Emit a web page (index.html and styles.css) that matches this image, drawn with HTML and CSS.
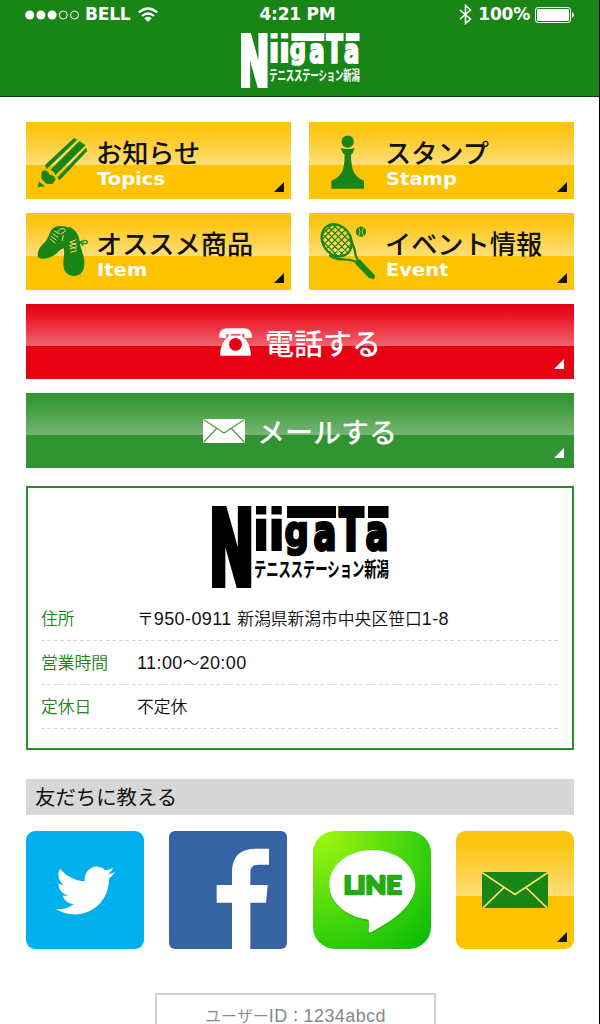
FILE: index.html
```html
<!DOCTYPE html>
<html lang="ja">
<head>
    <meta charset="UTF-8">
    <meta name="viewport" content="width=device-width, initial-scale=1.0">
    <title>Niigata テニスステーション新潟</title>
    <link rel="stylesheet" href="styles.css">
</head>
<body>
    <div class="page">
        <header class="header">
            <div class="status">
                <div class="status-left">
                    <svg width="54" height="10" viewBox="0 0 54 10">
                        <g fill="#fff"><circle cx="4.700" cy="5" r="4.500"/><circle cx="15.900" cy="5" r="4.500"/><circle cx="27.100" cy="5" r="4.500"/></g>
                        <g fill="none" stroke="#fff"><circle cx="38.300" cy="5" r="4"/><circle cx="49.500" cy="5" r="4"/></g>
                    </svg>
                    <span class="carrier">BELL</span>
                    <svg width="20" height="15" viewBox="0 0 20 15">
                        <g fill="none" stroke="#fff" stroke-width="2.200"><path d="M.8 5.500Q10-2.500 19.200 5.500"/><path d="M4 9Q10 4 16 9"/></g>
                        <path d="M6.300 11.200Q10 8.500 13.700 11.200L10 15z" fill="#fff"/>
                    </svg>
                </div>
                <span class="time">4:21 PM</span>
                <div class="status-right">
                    <svg width="13" height="21" viewBox="0 0 13 21"><path d="M1 6l10.500 9L6.500 19.500V1.500L11.500 6 1 15" fill="none" stroke="#fff" stroke-width="1.600"/></svg>
                    <span class="percent">100%</span>
                    <svg width="40" height="16" viewBox="0 0 40 16"><rect x=".5" y=".5" width="35" height="15" rx="2.500" fill="none" stroke="#fff"/><rect x="2" y="2" width="32" height="12" rx="1" fill="#fff"/><path d="M37 5q4 3 0 6z" fill="#fff"/></svg>
                </div>
            </div>
            <svg class="header-logo" viewBox="0 0 177 82">
                <g fill="currentColor" stroke="currentColor">
                    <text class="logo-n" transform="translate(-3.2 78.500) scale(.53 1)" font-size="103" stroke-width="7">N</text>
                    <text class="logo-en" x="39" y="45" font-size="59" stroke="none">i</text>
                    <text class="logo-en" x="54.500" y="45" font-size="59" stroke="none">i</text>
                    <text class="logo-en" transform="translate(72.500 39.500) scale(.79 1)" font-size="43" stroke-width="2.500">g</text>
                    <text class="logo-en" transform="translate(101.500 44) scale(.68 1)" font-size="50" stroke-width="3">a</text>
                    <text class="logo-en" transform="translate(127.500 43.500) scale(.58 1)" font-size="58" stroke-width="5">T</text>
                    <text class="logo-en" transform="translate(153.500 44) scale(.68 1)" font-size="50" stroke-width="3">a</text>
                    <rect x="75" y="0" width="49" height="12" stroke="none"/>
                    <rect x="127" y="0" width="25.500" height="12" stroke="none"/>
                    <rect x="156" y="0" width="20.500" height="12" stroke="none"/>
                    <text class="logo-ja" transform="translate(42 70.500) scale(.614 1)" font-size="20" stroke-width=".2">テニスステーション新潟</text>
                </g>
            </svg>
        </header>

        <main class="main">
            <nav class="menu">
                <a class="menu-item corner">
                    <svg class="menu-icon" viewBox="18 21 210 231">
                        <g fill="#1a8517">
                            <path d="M75 150L162 69l10 5-92 89z"/>
                            <path d="M91 164L178 78l19 13-91 90-5-10z"/>
                            <path d="M112 187l86-89 4 9-83 89z"/>
                            <path d="M65 170l8-5 11 5 5 9 13 4 5 11-10 13-18-1-15-15z"/>
                            <path d="M57 200l18 14-22 3z"/>
                        </g>
                    </svg>
                    <div><b>お知らせ</b><span>Topics</span></div>
                </a>
                <a class="menu-item corner wide">
                    <svg class="menu-icon" viewBox="27 21 210 231">
                        <g fill="#1a8517">
                            <circle cx="143" cy="80" r="18.500"/>
                            <path d="M122 99q21 6 42 0l-6 16-5 4q0 31 7 49 9 21 32 29v24H94v-24q24-9 33-29 7-18 7-49l-5-4z"/>
                        </g>
                    </svg>
                    <div><b>スタンプ</b><span>Stamp</span></div>
                </a>
                <a class="menu-item corner">
                    <svg class="menu-icon" viewBox="18 24 210 231">
                        <g fill="#1a8517">
                            <path d="M100 69c-11 8-13 27-24 41-14 12-26 27-22 46 10 13 48 1 62-17 7-8 16-8 22-13l10-56c-13-9-34-9-48-1z"/>
                            <path d="M127 89c-1 20 9 42 4 71-4 28 2 52 32 53 25-1 34-25 29-52-3-21-12-34-14-57-3-20-16-33-31-39z"/>
                        </g>
                        <g fill="none" stroke="#ffdc67" stroke-width="3">
                            <path d="M90 102l16 12M93 94l17 12M98 86l16 11M103 78l17 9M114 80c5-12 21-12 22-3-4 8-10 5-14 11M130 91l-4 17M149 112l20-8M148 122l22-8M149 132l22-7M151 142l20-5M151 112l18 8M150 124l19 7"/>
                        </g>
                        <path d="M177 112c9-3 22-10 25-2 0 8-13 7-22 1l10 11" fill="none" stroke="#1a8517" stroke-width="4"/>
                    </svg>
                    <div><b>オススメ商品</b><span>Item</span></div>
                </a>
                <a class="menu-item corner wide">
                    <svg class="menu-icon" viewBox="27 24 210 231">
                        <clipPath id="head"><ellipse cx="110" cy="106" rx="42" ry="51" transform="rotate(-35 110 106)"/></clipPath>
                        <g fill="none" stroke="#1a8517">
                            <path clip-path="url(#head)" stroke-width="3.500" d="M40 80l90 90M50 70l100 100M60 60l100 100M70 50l100 100M80 40l100 100M40 100l80 80M40 120l60 60M150 40L40 150M130 40L40 130M165 45L50 160M175 55L60 170M180 70L75 175M180 90L90 180M115 40L40 115"/>
                            <ellipse cx="110" cy="106" rx="42" ry="51" transform="rotate(-35 110 106)" stroke-width="7"/>
                            <path stroke-width="7" d="M88 150q15 12 40 13 34 1 48 12M150 98q9 21 14 36 2 24 16 42"/>
                            <path stroke-width="19" d="M172 169l43 45"/>
                            <path stroke-width="14" stroke-linecap="round" d="M207 206l11 9"/>
                        </g>
                        <circle cx="183" cy="80" r="15.500" fill="#1a8517"/>
                        <path d="M174 67q11 13 1 26M192 67q-10 13-1 26" fill="none" stroke="#ffd342" stroke-width="2.500"/>
                    </svg>
                    <div><b>イベント情報</b><span>Event</span></div>
                </a>
            </nav>

            <a class="contact tel corner">
                <svg width="33" height="28" viewBox="118 84 98 82">
                    <path d="M118 112q0-27 22-28h54q22 1 22 28l-20 2q-4-3-3-13h-6v7q23 17 26 55-1 3-5 3h-82q-5 0-5-4 2-36 25-54v-7h-6q1 10-3 13z" fill="#fff"/>
                    <path d="M153 101h28v5h-28z" fill="#ee5460"/>
                    <circle cx="167" cy="132" r="19" fill="#e60012"/>
                </svg>
                <b>電話する</b>
            </a>
            <a class="contact mail corner">
                <svg width="42" height="24" viewBox="0 0 42 24">
                    <path d="M0 0h42v24H0z" fill="#fff"/>
                    <path d="M.5.5L21 14 41.500.5M.5 23.500l13-14M41.500 23.500l-13-14" fill="none" stroke="#4b9e48" stroke-width="1.200"/>
                </svg>
                <b>メールする</b>
            </a>

            <section class="info">
                <svg class="info-logo" viewBox="0 0 177 82">
                    <g fill="currentColor" stroke="currentColor">
                        <text class="logo-n" transform="translate(-3.2 78.500) scale(.53 1)" font-size="103" stroke-width="7">N</text>
                        <text class="logo-en" x="39" y="45" font-size="59" stroke="none">i</text>
                        <text class="logo-en" x="54.500" y="45" font-size="59" stroke="none">i</text>
                        <text class="logo-en" transform="translate(72.500 39.500) scale(.79 1)" font-size="43" stroke-width="2.500">g</text>
                        <text class="logo-en" transform="translate(101.500 44) scale(.68 1)" font-size="50" stroke-width="3">a</text>
                        <text class="logo-en" transform="translate(127.500 43.500) scale(.58 1)" font-size="58" stroke-width="5">T</text>
                        <text class="logo-en" transform="translate(153.500 44) scale(.68 1)" font-size="50" stroke-width="3">a</text>
                        <rect x="75" y="0" width="49" height="12" stroke="none"/>
                        <rect x="127" y="0" width="25.500" height="12" stroke="none"/>
                        <rect x="156" y="0" width="20.500" height="12" stroke="none"/>
                        <text class="logo-ja" transform="translate(42 70.500) scale(.614 1)" font-size="20" stroke-width=".2">テニスステーション新潟</text>
                    </g>
                </svg>
                <dl>
                    <div class="row"><dt>住所</dt><dd>〒<i>950-0911 </i>新潟県新潟市中央区笹口<i>1-8</i></dd></div>
                    <div class="row"><dt>営業時間</dt><dd><i>11:00</i>～<i>20:00</i></dd></div>
                    <div class="row"><dt>定休日</dt><dd>不定休</dd></div>
                </dl>
            </section>

            <h2 class="share-title">友だちに教える</h2>
            <div class="share">
                <a class="tile twitter">
                    <svg width="59" height="59" viewBox="0 0 24 24"><path fill="#fff" d="M23.953 4.570a10 10 0 01-2.825.775 4.958 4.958 0 002.163-2.723c-.951.555-2.005.959-3.127 1.184a4.920 4.920 0 00-8.384 4.482C7.690 8.095 4.067 6.130 1.640 3.162a4.822 4.822 0 00-.666 2.475c0 1.710.870 3.213 2.188 4.096a4.904 4.904 0 01-2.228-.616v.060a4.923 4.923 0 003.946 4.827 4.996 4.996 0 01-2.212.085 4.936 4.936 0 004.604 3.417 9.867 9.867 0 01-6.102 2.105c-.390 0-.779-.023-1.170-.067a13.995 13.995 0 007.557 2.209c9.053 0 13.998-7.496 13.998-13.985 0-.210 0-.420-.015-.630A9.935 9.935 0 0024 4.590z"/></svg>
                </a>
                <a class="tile facebook">
                    <svg width="118" height="118" viewBox="447 33 354 354"><path fill="#fff" d="M636 387V248h-46v-53h46v-42q1-67 72-67h39v48h-32q-24 0-24 24v37h52l-5 53h-47v139z"/></svg>
                </a>
                <a class="tile line">
                    <svg width="118" height="118" viewBox="37 33 354 354">
                        <path fill="#0a8d0a" opacity=".35" d="M215 92c-72 0-129 46-129 104 0 53 49 94 113 104 10 2 6 22 5 34 0 6 5 6 10 3 58-31 130-78 130-141 0-58-57-104-129-104z" transform="translate(0 3)"/>
                        <path fill="#fff" d="M215 90c-72 0-129 46-129 104 0 53 49 94 113 104 10 2 6 22 5 34 0 6 5 6 10 3 58-31 130-78 130-141 0-58-57-104-129-104z"/>
                        <text class="line-text" x="129" y="223" textLength="174" lengthAdjust="spacingAndGlyphs">LINE</text>
                    </svg>
                </a>
                <a class="tile letter corner">
                    <svg width="66" height="36" viewBox="0 0 66 36">
                        <path d="M0 0h66v36H0z" fill="#1a8517"/>
                        <path d="M0 .5l33 22L66 .5M.8 36L22 15.500M65.200 36L44 15.500" fill="none" stroke="#f9e768" stroke-width="1.700"/>
                    </svg>
                </a>
            </div>

            <div class="user-id">ユーザー<i>ID</i>：<i>1234abcd</i></div>
        </main>
    </div>
</body>
</html>
```
FILE: styles.css
```css
* {
    box-sizing: border-box;
}

body {
    margin: 0;
    height: 1024px;
    overflow: hidden;
    background: #fff;
    font-family: "Noto Sans CJK JP", sans-serif;
}

i {
    font-style: normal;
}

.page {
    height: 1024px;
    overflow: hidden;
    border-right: 1px solid #000;
}

/* header */
.header {
    display: flex;
    flex-direction: column;
    align-items: center;
    height: 97px;
    background: #1a8517;
    border-bottom: 1px solid #0b3a0a;
    color: #fff;
}

.status {
    display: grid;
    grid-template-columns: 1fr auto 1fr;
    align-items: center;
    width: 100%;
    height: 29px;
    padding: 0 24px 0 25px;
    font: bold 17px/29px "DejaVu Sans", sans-serif;
    letter-spacing: -0.2px;
}

.status-left, .status-right {
    display: flex;
    align-items: center;
}

.carrier {
    margin: 0 8px 0 6px;
}

.time {
    margin-right: 5px;
}

.status-right {
    justify-content: flex-end;
}

.percent {
    margin: 0 5px 0 6px;
}

.header-logo {
    width: 119px;
    height: 55px;
    margin: 4px 0 0 2px;
}

/* logo lettering */
.logo-n, .logo-en {
    font-family: "DejaVu Sans", sans-serif;
    font-weight: bold;
}

.logo-ja {
    font-family: "Noto Sans CJK JP", sans-serif;
    font-weight: bold;
}

.main {
    display: flex;
    flex-direction: column;
    padding: 25px 25px 0 26px;
}

/* yellow menu */
.menu {
    display: grid;
    grid-template-columns: 265px 265px;
    justify-content: space-between;
    gap: 14px 0;
    margin-bottom: 14px;
}

.menu-item {
    display: flex;
    height: 77px;
    background: linear-gradient(#fdc30a 0, #fdc71a 15%, #fede78 55.5%, #fdc300 56%, #ffc400 100%);
}

.menu-icon {
    width: 70px;
    height: 77px;
}

.wide .menu-icon {
    margin-right: 6px;
}

.menu-item b {
    display: block;
    margin-top: 16px;
    font-size: 26.200px;
    font-weight: 500;
    line-height: 28px;
    color: #111;
}

.menu-item span {
    display: inline-block;
    margin-left: 1px;
    font: bold 17px/24px "DejaVu Sans", sans-serif;
    color: #fff;
    transform: scaleX(1.15);
    transform-origin: 0 0;
}

.corner {
    position: relative;
}

.corner::after {
    content: "";
    position: absolute;
    right: 7px;
    bottom: 7px;
    border-left: 10px solid transparent;
    border-bottom: 10px solid #111;
}

/* call and mail buttons */
.contact {
    display: flex;
    justify-content: center;
    align-items: center;
    height: 75px;
    color: #fff;
}

.contact.corner::after {
    right: 10px;
    bottom: 10px;
    border-bottom-color: #fff;
}

.contact b {
    font-size: 29px;
    font-weight: 500;
    line-height: 40px;
}

.tel {
    gap: 13px;
    background: linear-gradient(#e60012 0, #e81222 15%, #f1636f 55.5%, #e60012 56%);
}

.mail {
    gap: 12px;
    margin-top: 14px;
    background: linear-gradient(#309530 0, #3c9b3b 15%, #74b572 55.5%, #309530 56%);
}

.mail b {
    font-size: 28px;
}

/* shop info */
.info {
    height: 264px;
    margin-top: 18px;
    padding: 18px 13px 0;
    border: 2px solid #2b8e29;
}

.info-logo {
    display: block;
    width: 177px;
    height: 82px;
    margin-left: 171px;
}

.info dl {
    margin: 9px 0 0;
}

.row {
    display: flex;
    height: 44px;
    background: repeating-linear-gradient(90deg, #d8d8d8 0 4px, #fff 4px 6.500px) 0 100% / 100% 1.500px no-repeat;
    font-size: 16.800px;
    font-weight: 350;
    line-height: 42px;
}

.row dt {
    width: 96px;
    color: #1a8517;
}

.row dd {
    margin: 0;
    color: #111;
}

.row dd i {
    font-family: "Liberation Sans", sans-serif;
    font-size: 18px;
    letter-spacing: 0.4px;
}

/* share */
.share-title {
    height: 36px;
    margin: 29px 0 16px;
    padding-left: 9px;
    background: #d7d7d7;
    font-size: 20.400px;
    font-weight: 400;
    line-height: 34px;
    color: #111;
}

.share {
    display: flex;
    justify-content: space-between;
}

.tile {
    display: flex;
    justify-content: center;
    align-items: center;
    width: 118px;
    height: 118px;
    border-radius: 9px;
}

.twitter {
    background: #00b0ed;
}

.facebook {
    border-radius: 6px;
    background: #3664a2;
}

.line {
    border-radius: 22px;
    background: radial-gradient(circle at 10% 5%, #9cf50c 0, #43d60c 55%, #0bbb04 95%);
}

.line-text {
    font-family: "Lato", sans-serif;
    font-weight: bold;
    font-size: 77px;
    fill: #22ab12;
    stroke: #22ab12;
    stroke-width: 8px;
    stroke-linejoin: round;
}

.letter {
    background: linear-gradient(#fdc30a 0, #fdc71a 15%, #fede78 55%, #fdc300 55.5%, #ffc400 100%);
}

.user-id {
    align-self: center;
    width: 281px;
    height: 50px;
    margin: 44px 9px 0 0;
    border: 2px solid #d0d0d0;
    font-size: 16px;
    font-weight: 350;
    line-height: 40px;
    text-align: center;
    color: #888;
}

.user-id i {
    font-family: "Liberation Sans", sans-serif;
    font-size: 18px;
    letter-spacing: 0.4px;
}
```
